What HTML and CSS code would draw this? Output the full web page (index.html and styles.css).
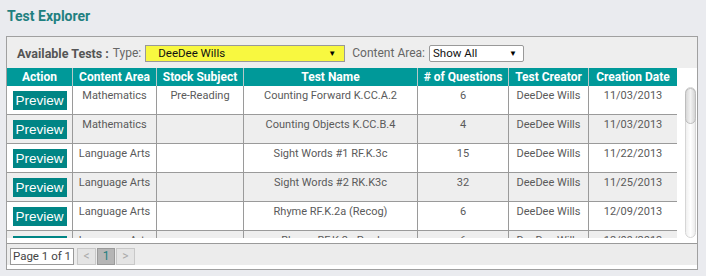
FILE: index.html
```html
<!DOCTYPE html>
<html lang="en">
<head>
    <meta charset="UTF-8">
    <title>Test Explorer</title>
    <link rel="stylesheet" href="styles.css">
</head>
<body>
    <h1 class="title">Test Explorer</h1>
    <div class="panel">
        <div class="toolbar">
            <span class="toolbar-label">Available Tests :</span>
            <span class="field-label">Type:</span>
            <div class="select select-type"><span>DeeDee Wills</span><span class="arrow">&#9660;</span></div>
            <span class="field-label">Content Area:</span>
            <div class="select select-area"><span>Show All</span><span class="arrow">&#9660;</span></div>
        </div>

        <div class="grid-head">
            <div class="row head-row">
                <div class="cell">Action</div>
                <div class="cell">Content Area</div>
                <div class="cell">Stock Subject</div>
                <div class="cell">Test Name</div>
                <div class="cell"># of Questions</div>
                <div class="cell">Test Creator</div>
                <div class="cell">Creation Date</div>
            </div>
        </div>

        <div class="grid-body">
            <div class="rows">
                <div class="row">
                    <div class="cell"><button class="preview">Preview</button></div>
                    <div class="cell">Mathematics</div>
                    <div class="cell">Pre-Reading</div>
                    <div class="cell">Counting Forward K.CC.A.2</div>
                    <div class="cell">6</div>
                    <div class="cell">DeeDee Wills</div>
                    <div class="cell">11/03/2013</div>
                </div>
                <div class="row alt">
                    <div class="cell"><button class="preview">Preview</button></div>
                    <div class="cell">Mathematics</div>
                    <div class="cell"></div>
                    <div class="cell">Counting Objects K.CC.B.4</div>
                    <div class="cell">4</div>
                    <div class="cell">DeeDee Wills</div>
                    <div class="cell">11/03/2013</div>
                </div>
                <div class="row">
                    <div class="cell"><button class="preview">Preview</button></div>
                    <div class="cell">Language Arts</div>
                    <div class="cell"></div>
                    <div class="cell">Sight Words #1 RF.K.3c</div>
                    <div class="cell">15</div>
                    <div class="cell">DeeDee Wills</div>
                    <div class="cell">11/22/2013</div>
                </div>
                <div class="row alt">
                    <div class="cell"><button class="preview">Preview</button></div>
                    <div class="cell">Language Arts</div>
                    <div class="cell"></div>
                    <div class="cell">Sight Words #2 RK.K3c</div>
                    <div class="cell">32</div>
                    <div class="cell">DeeDee Wills</div>
                    <div class="cell">11/25/2013</div>
                </div>
                <div class="row">
                    <div class="cell"><button class="preview">Preview</button></div>
                    <div class="cell">Language Arts</div>
                    <div class="cell"></div>
                    <div class="cell">Rhyme RF.K.2a (Recog)</div>
                    <div class="cell">6</div>
                    <div class="cell">DeeDee Wills</div>
                    <div class="cell">12/09/2013</div>
                </div>
                <div class="row alt">
                    <div class="cell"><button class="preview">Preview</button></div>
                    <div class="cell">Language Arts</div>
                    <div class="cell"></div>
                    <div class="cell">Rhyme RF.K.2a Prod</div>
                    <div class="cell">6</div>
                    <div class="cell">DeeDee Wills</div>
                    <div class="cell">12/09/2013</div>
                </div>
            </div>
            <div class="scrollbar"><div class="thumb"></div></div>
        </div>

        <div class="pager">
            <span class="page-info">Page 1 of 1</span>
            <span class="page-btn">&lt;</span>
            <span class="page-btn current">1</span>
            <span class="page-btn">&gt;</span>
        </div>
    </div>
</body>
</html>
```

FILE: styles.css
```css
body {
    margin: 0;
    background-color: #eaebef;
    font-family: Roboto, "Liberation Sans", sans-serif;
    font-size: 11px;
    color: #5a5a5a;
}
.title {
    margin: 0;
    padding: 7px 0 0 7px;
    height: 36px;
    box-sizing: border-box;
    font-size: 14px;
    line-height: 18px;
    font-weight: bold;
    color: #1f8080;
}
.panel {
    margin-left: 6px;
    width: 692px;
    height: 234px;
    box-sizing: border-box;
    border: 1px solid #a0a0a0;
    background-color: #fff;
}
.toolbar {
    height: 31px;
    display: flex;
    align-items: center;
    padding-left: 10px;
    padding-top: 1px;
    box-sizing: border-box;
    background-color: #eeeeee;
}
.toolbar-label {
    font-size: 12.5px;
    font-weight: bold;
    color: #555;
    margin-right: 4px;
}
.field-label {
    font-size: 12px;
    color: #666;
    margin-right: 4px;
}
.select {
    height: 17px;
    box-sizing: border-box;
    border: 1px solid #999;
    display: flex;
    align-items: center;
    justify-content: space-between;
    font-size: 11.5px;
    color: #111;
    margin-right: 7px;
}
.select-type {
    width: 200px;
    padding: 0 8px 0 12px;
    background-color: #f8f840;
}
.select-area {
    width: 95px;
    padding: 0 6px 0 3px;
    background-color: #fff;
    border-radius: 2px;
}
.arrow {
    font-size: 8px;
    color: #000;
}
.row {
    display: grid;
    grid-template-columns: 66px 84px 87px 174px 91px 80px 88px;
    width: 670px;
}
.cell {
    border-right: 1px solid #9a9a9a;
    text-align: center;
}
.cell:last-child {
    border-right: none;
}
.head-row {
    height: 18px;
    background-color: #009999;
}
.head-row .cell {
    color: #fff;
    font-weight: bold;
    font-size: 12px;
    line-height: 18px;
    white-space: nowrap;
    border-right-color: #b8c8c8;
}
.grid-body {
    display: flex;
    height: 158px;
    border-bottom: 1px solid #9a9a9a;
    box-sizing: border-box;
}
.rows {
    width: 670px;
    height: 152px;
    overflow: hidden;
}
.rows .row {
    height: 29px;
    box-sizing: border-box;
    border-bottom: 1px solid #9a9a9a;
    background-color: #fff;
}
.rows .row.alt {
    background-color: #eeeeee;
}
.rows .cell {
    padding-top: 3px;
    line-height: 14px;
}
.preview {
    display: block;
    margin: 2px auto 0;
    width: 54px;
    height: 19px;
    padding: 0;
    border: none;
    background-color: #008585;
    color: #fff;
    font-family: "Liberation Sans", Arial, sans-serif;
    font-size: 13.5px;
    line-height: 19px;
}
.scrollbar {
    margin: 1px 0 0 8px;
    width: 11px;
    height: 151px;
    box-sizing: border-box;
    border: 1px solid #d6d6d6;
    border-radius: 6px;
    background: linear-gradient(to right, #f0f0f0, #ffffff 50%, #ececec);
}
.thumb {
    height: 34px;
    margin: 0 -1px;
    border: 1px solid #bdbdbd;
    border-radius: 6px;
    background: linear-gradient(to right, #d8d8d8, #f2f2f2 50%, #d4d4d4);
}
.pager {
    display: flex;
    align-items: center;
    gap: 1px;
    padding: 3px 0 0 3px;
    box-sizing: border-box;
    background-color: #ececec;
    border-bottom: 3px solid #fff;
    height: 24px;
}
.page-info {
    width: 64px;
    height: 17px;
    box-sizing: border-box;
    border: 1px solid #999;
    background-color: #fff;
    font-size: 11.5px;
    line-height: 15px;
    text-align: center;
    color: #444;
    margin-right: 2px;
}
.page-btn {
    width: 19px;
    height: 17px;
    box-sizing: border-box;
    border: 1px solid #c8c8c8;
    background-color: #e4e4e4;
    color: #aaa;
    text-align: center;
    font-size: 12px;
    line-height: 15px;
}
.page-btn.current {
    width: 18px;
    border-color: #9a9a9a;
    background-color: #b5b5b5;
    color: #1f8080;
}
```
